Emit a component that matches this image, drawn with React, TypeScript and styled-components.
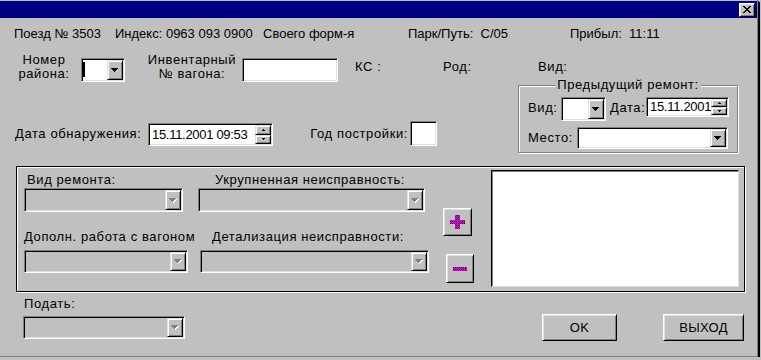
import styled, { createGlobalStyle } from 'styled-components';

const GlobalStyle = createGlobalStyle`
  html, body {
    margin: 0;
    padding: 0;
    background: #c0c0c0;
  }
  body {
    font-family: "Liberation Sans", Arial, sans-serif;
    font-size: 13px;
    color: #000;
  }
  * { box-sizing: border-box; }
`;

const Window = styled.div`
  width: 758px;
  height: 357px;
  padding-top: 1px;
  background: #c0c0c0;
  border-right: 1px solid #808080;
  border-bottom: 1px solid #808080;
  box-shadow: 1px 1px 0 #000, 2px 2px 0 #000;
  display: flex;
  flex-direction: column;
  align-items: flex-start;
  overflow: hidden;
`;

const TitleBar = styled.div`
  width: 100%;
  height: 17px;
  background: #000080;
  display: flex;
  justify-content: flex-end;
  align-items: center;
  padding-right: 1px;
`;

const RaisedBox = styled.div<{ $w: number; $h: number; $ml?: number; $mt?: number; $mr?: number }>`
  width: ${p => p.$w}px;
  height: ${p => p.$h}px;
  margin-left: ${p => p.$ml || 0}px;
  margin-top: ${p => p.$mt || 0}px;
  margin-right: ${p => p.$mr || 0}px;
  flex: none;
  background: #c0c0c0;
  border: 1px solid;
  border-color: #fff #000 #000 #fff;
  box-shadow: inset 1px 1px #dfdfdf, inset -1px -1px #808080;
  display: flex;
  align-items: center;
  justify-content: center;
`;

const Text = styled.span<{ $ml?: number; $mt?: number; $w?: number; $align?: string; $pr?: number }>`
  display: block;
  flex: none;
  line-height: 14px;
  white-space: nowrap;
  letter-spacing: 0.6px;
  margin-left: ${p => p.$ml || 0}px;
  margin-top: ${p => p.$mt || 0}px;
  padding-right: ${p => p.$pr || 0}px;
  width: ${p => (p.$w ? `${p.$w}px` : 'auto')};
  text-align: ${p => p.$align || 'left'};
`;

const InfoRow = styled.div`
  display: grid;
  grid-template-columns: 101px 148px 145px 162px auto;
  padding-left: 14px;
  margin-top: 9px;
  line-height: 14px;
  white-space: nowrap;
`;

const UpperSection = styled.div`
  display: flex;
  margin-top: 12px;
`;

const LeftCol = styled.div`
  width: 518px;
  display: flex;
  flex-direction: column;
`;

const RightCol = styled.div`
  display: flex;
  flex-direction: column;
`;

const Row = styled.div<{ $pl?: number; $mt?: number }>`
  display: flex;
  align-items: flex-start;
  padding-left: ${p => p.$pl || 0}px;
  margin-top: ${p => p.$mt || 0}px;
`;

const Field = styled.div<{ $w: number; $h: number; $ml?: number; $mt?: number; $disabled?: boolean }>`
  width: ${p => p.$w}px;
  height: ${p => p.$h}px;
  margin-left: ${p => p.$ml || 0}px;
  margin-top: ${p => p.$mt || 0}px;
  flex: none;
  padding: 1px;
  border: 1px solid;
  border-color: #808080 #fff #fff #808080;
  box-shadow: inset 1px 1px #000, inset -1px -1px #dfdfdf;
  background: ${p => (p.$disabled ? '#c0c0c0' : '#fff')};
  display: flex;
  align-items: stretch;
`;

const FieldValue = styled.span`
  flex: 1;
  padding-left: 2px;
  line-height: 14px;
  letter-spacing: -0.3px;
  align-self: center;
  white-space: nowrap;
  overflow: hidden;
`;

const Caret = styled.span`
  width: 2px;
  height: 15px;
  margin-top: 2px;
  background: #000;
  align-self: flex-start;
`;

const DropBtn = styled.div`
  width: 16px;
  margin-left: auto;
  flex: none;
  background: #c0c0c0;
  border: 1px solid;
  border-color: #dfdfdf #000 #000 #dfdfdf;
  box-shadow: inset 1px 1px #fff, inset -1px -1px #808080;
  display: flex;
  align-items: center;
  justify-content: center;
`;

const SpinCol = styled.div`
  width: 16px;
  margin-left: auto;
  flex: none;
  display: flex;
  flex-direction: column;
`;

const SpinBtn = styled.div`
  flex: 1;
  background: #c0c0c0;
  border: 1px solid;
  border-color: #dfdfdf #000 #000 #dfdfdf;
  box-shadow: inset 1px 1px #fff, inset -1px -1px #808080;
  display: flex;
  align-items: center;
  justify-content: center;
`;

const GroupBox = styled.div`
  width: 220px;
  height: 68px;
  margin-top: 11px;
  border: 1px solid #808080;
  box-shadow: inset 1px 1px #fff, 1px 1px #fff;
  display: flex;
  flex-direction: column;
`;

const Legend = styled.span`
  display: block;
  width: fit-content;
  margin: -8px auto 0;
  padding: 0 2px;
  background: #c0c0c0;
  line-height: 14px;
  letter-spacing: 0.6px;
  white-space: nowrap;
`;

const Frame = styled.div`
  width: 729px;
  height: 126px;
  margin: 13px 0 0 16px;
  border: 1px solid #000;
  box-shadow: inset 1px 1px #fff, 1px 1px #fff;
  display: flex;
`;

const FieldsBlock = styled.div`
  width: 426px;
  padding-top: 6px;
  display: flex;
  flex-direction: column;
`;

const FieldGroup = styled.div<{ $ml: number; $w: number }>`
  width: ${p => p.$w}px;
  flex: none;
  display: flex;
  flex-direction: column;
  margin-left: ${p => p.$ml}px;
`;

const ButtonsCol = styled.div`
  width: 48px;
  display: flex;
  flex-direction: column;
  align-items: flex-start;
`;

const ListBox = styled.div`
  width: 248px;
  height: 117px;
  margin-top: 3px;
  background: #fff;
  border: 1px solid;
  border-color: #000 #dfdfdf #dfdfdf #000;
  box-shadow: inset 1px 1px #808080, inset -1px -1px #fff;
`;

const BottomRow = styled.div`
  display: flex;
  align-items: flex-start;
  padding-left: 23px;
  margin-top: 5px;
`;

const ButtonLabel = styled.span`
  line-height: 14px;
  letter-spacing: 0.3px;
`;

const pixelArrow = 'M0 0h7v1H0zM1 1h5v1H1zM2 2h3v1H2zM3 3h1v1H3z';

const ArrowDown = ({ disabled }: { disabled?: boolean }) => (
  <svg width="8" height="5" viewBox="0 0 8 5" shapeRendering="crispEdges">
    {disabled && <path d={pixelArrow} fill="#fff" transform="translate(1 1)" />}
    <path d={pixelArrow} fill={disabled ? '#808080' : '#000'} />
  </svg>
);

const SpinArrow = ({ up }: { up?: boolean }) => (
  <svg width="3" height="2" viewBox="0 0 3 2" shapeRendering="crispEdges">
    <path d={up ? 'M1 0h1v1H1zM0 1h3v1H0z' : 'M0 0h3v1H0zM1 1h1v1H1z'} fill="#000" />
  </svg>
);

const CloseGlyph = () => (
  <svg width="8" height="7" viewBox="0 0 8 7" shapeRendering="crispEdges">
    <path
      d="M0 0h2v1H0zM6 0h2v1H6zM1 1h2v1H1zM5 1h2v1H5zM2 2h4v1H2zM3 3h2v1H3zM2 4h4v1H2zM1 5h2v1H1zM5 5h2v1H5zM0 6h2v1H0zM6 6h2v1H6z"
      fill="#000"
    />
  </svg>
);

// magenta dithered with dark dots, like the 16-colour bitmap glyphs
const Dither = ({ id }: { id: string }) => (
  <defs>
    <pattern id={id} width="2" height="2" patternUnits="userSpaceOnUse">
      <rect width="2" height="2" fill="#ff00ff" />
      <rect width="1" height="1" fill="#000" />
      <rect x="1" y="1" width="1" height="1" fill="#800080" />
    </pattern>
  </defs>
);

const PlusGlyph = () => (
  <svg width="15" height="14" viewBox="0 0 15 14" shapeRendering="crispEdges">
    <Dither id="dithPlus" />
    <path d="M5 0h5v5h5v4H10v5H5V9H0V5h5z" fill="url(#dithPlus)" />
  </svg>
);

const MinusGlyph = () => (
  <svg width="14" height="4" viewBox="0 0 14 4" shapeRendering="crispEdges">
    <Dither id="dithMinus" />
    <rect width="14" height="4" fill="url(#dithMinus)" />
  </svg>
);

type ComboProps = { w: number; h: number; ml?: number; mt?: number; disabled?: boolean; caret?: boolean };

const Combo = ({ w, h, ml, mt, disabled, caret }: ComboProps) => (
  <Field $w={w} $h={h} $ml={ml} $mt={mt} $disabled={disabled}>
    {caret && <Caret />}
    <DropBtn>
      <ArrowDown disabled={disabled} />
    </DropBtn>
  </Field>
);

const Spin = ({ w, h, ml, mt, value }: { w: number; h: number; ml?: number; mt?: number; value: string }) => (
  <Field $w={w} $h={h} $ml={ml} $mt={mt}>
    <FieldValue>{value}</FieldValue>
    <SpinCol>
      <SpinBtn>
        <SpinArrow up />
      </SpinBtn>
      <SpinBtn>
        <SpinArrow />
      </SpinBtn>
    </SpinCol>
  </Field>
);

export default function App() {
  return (
    <>
      <GlobalStyle />
      <Window>
        <TitleBar>
          <RaisedBox $w={16} $h={14} $mr={1}>
            <CloseGlyph />
          </RaisedBox>
        </TitleBar>

        <InfoRow>
          <span>Поезд № 3503</span>
          <span>Индекс: 0963 093 0900</span>
          <span>Своего форм-я</span>
          <span>Парк/Путь:&nbsp; С/05</span>
          <span>Прибыл:&nbsp; 11:11</span>
        </InfoRow>

        <UpperSection>
          <LeftCol>
            <Row $pl={16}>
              <Text $w={56} $align="center">
                Номер
                <br />
                района:
              </Text>
              <Combo w={44} h={24} ml={9} mt={5} caret />
              <Text $w={100} $ml={17} $align="center">
                Инвентарный
                <br />№ вагона:
              </Text>
              <Field $w={96} $h={24} $mt={5} />
              <Text $ml={17} $mt={7} $w={88}>
                КС :
              </Text>
              <Text $mt={7}>Род:</Text>
            </Row>
            <Row $pl={15} $mt={39}>
              <Text $w={133} $mt={6}>
                Дата обнаружения:
              </Text>
              <Spin w={125} h={23} mt={2} value="15.11.2001 09:53" />
              <Text $w={137} $mt={6} $align="right" $pr={2}>
                Год постройки:
              </Text>
              <Field $w={27} $h={25} />
            </Row>
          </LeftCol>

          <RightCol>
            <Text $ml={20} $mt={7}>
              Вид:
            </Text>
            <GroupBox>
              <Legend>Предыдущий ремонт:</Legend>
              <Row $pl={9} $mt={5}>
                <Text $w={33} $mt={4}>
                  Вид:
                </Text>
                <Combo w={45} h={24} />
                <Text $w={36} $ml={4} $mt={4}>
                  Дата:
                </Text>
                <Spin w={83} h={20} value="15.11.2001" />
              </Row>
              <Row $pl={9} $mt={6}>
                <Text $w={49} $mt={4}>
                  Место:
                </Text>
                <Combo w={151} h={22} />
              </Row>
            </GroupBox>
          </RightCol>
        </UpperSection>

        <Frame>
          <FieldsBlock>
            <Row>
              <FieldGroup $ml={7} $w={159}>
                <Text $ml={3}>Вид ремонта:</Text>
                <Combo w={159} h={24} mt={1} disabled />
              </FieldGroup>
              <FieldGroup $ml={15} $w={227}>
                <Text $ml={17}>Укрупненная неисправность:</Text>
                <Combo w={227} h={24} mt={1} disabled />
              </FieldGroup>
            </Row>
            <Row $mt={18}>
              <FieldGroup $ml={7} $w={164}>
                <Text>Дополн. работа с вагоном</Text>
                <Combo w={164} h={23} mt={6} disabled />
              </FieldGroup>
              <FieldGroup $ml={12} $w={229}>
                <Text $ml={12}>Детализация неисправности:</Text>
                <Combo w={229} h={23} mt={6} disabled />
              </FieldGroup>
            </Row>
          </FieldsBlock>
          <ButtonsCol>
            <RaisedBox $w={29} $h={28} $mt={41}>
              <PlusGlyph />
            </RaisedBox>
            <RaisedBox $w={28} $h={29} $ml={3} $mt={18}>
              <MinusGlyph />
            </RaisedBox>
          </ButtonsCol>
          <ListBox />
        </Frame>

        <BottomRow>
          <FieldGroup $ml={0} $w={162}>
            <Text $ml={1}>Подать:</Text>
            <Combo w={162} h={23} mt={5} disabled />
          </FieldGroup>
          <RaisedBox $w={75} $h={27} $ml={357} $mt={17}>
            <ButtonLabel>OK</ButtonLabel>
          </RaisedBox>
          <RaisedBox $w={81} $h={27} $ml={46} $mt={17}>
            <ButtonLabel>ВЫХОД</ButtonLabel>
          </RaisedBox>
        </BottomRow>
      </Window>
    </>
  );
}
